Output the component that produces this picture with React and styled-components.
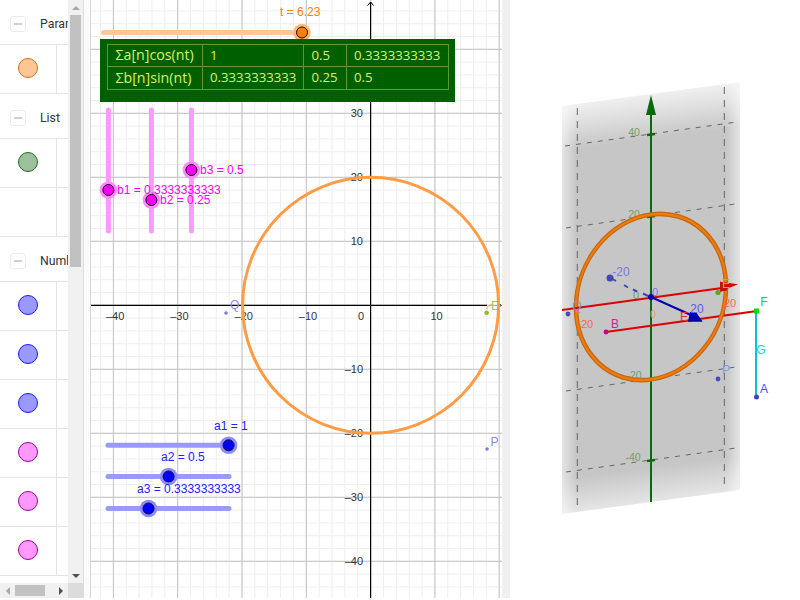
import React from "react";
import styled, { createGlobalStyle } from "styled-components";

const GlobalStyle = createGlobalStyle`
  html, body { margin: 0; padding: 0; background: #fff; overflow: hidden; }
  body { font-family: "Liberation Sans", Arial, sans-serif; }
`;

const Layout = styled.div`
  display: flex;
  width: 800px;
  height: 598px;
  background: #fff;
`;

/* algebra panel */
const AlgebraPanel = styled.div`
  display: grid;
  grid-template-columns: 68px 15px;
  grid-template-rows: 583px 15px;
  width: 83px;
  flex: none;
`;

const ListView = styled.div`
  overflow: hidden;
`;

const GroupHeader = styled.div`
  display: flex;
  align-items: center;
  box-sizing: border-box;
  height: ${(p) => p.$height}px;
  padding-top: ${(p) => p.$top}px;
  border-bottom: 1px solid #e4e4e4;
  white-space: nowrap;
`;

const CollapseButton = styled.span`
  display: flex;
  align-items: center;
  justify-content: center;
  flex: none;
  box-sizing: border-box;
  width: 16px;
  height: 16px;
  margin: 0 14px 0 10px;
  border: 1px solid #ececec;
  border-radius: 3px;
  &::before {
    content: "";
    width: 8px;
    height: 1.5px;
    background: #cfcfcf;
  }
`;

const GroupTitle = styled.span`
  font-family: "Roboto", "Liberation Sans", sans-serif;
  font-size: 12.3px;
  color: #333;
`;

const MarbleRow = styled.div`
  box-sizing: border-box;
  height: 49px;
  border-bottom: 1px solid #e4e4e4;
`;

const MarbleCell = styled.div`
  box-sizing: border-box;
  width: 57px;
  height: 48px;
  padding: 13px 0 0 18px;
  border-right: 1px solid #e4e4e4;
`;

const Marble = styled.div`
  box-sizing: border-box;
  width: 20px;
  height: 20px;
  border-radius: 50%;
  background: ${(p) => p.$fill};
  border: 1px solid ${(p) => p.$stroke};
`;

const VScroll = styled.div`
  display: flex;
  flex-direction: column;
  align-items: center;
  background: #f1f1f1;
`;

const ArrowSlot = styled.div`
  display: flex;
  align-items: center;
  justify-content: center;
  flex: none;
  height: 15px;
  width: 15px;
`;

const Arrow = styled.span`
  width: 0;
  height: 0;
  border-style: solid;
  border-color: transparent;
  ${(p) =>
    p.$dir === "up" && `border-width: 0 4px 4px; border-bottom-color: ${p.$color};`}
  ${(p) =>
    p.$dir === "down" && `border-width: 4px 4px 0; border-top-color: ${p.$color};`}
  ${(p) =>
    p.$dir === "left" && `border-width: 4px 4px 4px 0; border-right-color: ${p.$color};`}
  ${(p) =>
    p.$dir === "right" && `border-width: 4px 0 4px 4px; border-left-color: ${p.$color};`}
`;

const VThumb = styled.div`
  flex: none;
  width: 11px;
  height: 252px;
  background: #c1c1c1;
`;

const Spacer = styled.div`
  flex: 1;
`;

const HScroll = styled.div`
  display: flex;
  align-items: center;
  background: #f1f1f1;
`;

const HThumb = styled.div`
  flex: none;
  width: 30px;
  height: 11px;
  background: #c1c1c1;
`;

const Corner = styled.div`
  background: #dcdcdc;
`;

const LeftSplitter = styled.div`
  flex: none;
  box-sizing: border-box;
  width: 8px;
  background: #fbfbfb;
  border-left: 1px solid #dedede;
  border-right: 1px solid #d8d8d8;
`;

const RightSplitter = styled.div`
  flex: none;
  width: 8px;
  background: #f0f0f0;
`;

/* graphics view */
const GraphicsView = styled.div`
  position: relative;
  flex: none;
  width: 411px;
  overflow: hidden;
`;

const Canvas = styled.svg`
  display: block;
`;

const TickLabel = styled.text`
  font-family: "Liberation Sans", Arial, sans-serif;
  font-size: 11px;
  fill: #333;
`;

const ObjectLabel = styled.text`
  font-family: "Liberation Sans", Arial, sans-serif;
  font-size: ${(p) => p.$size || 12}px;
  fill: ${(p) => p.$color};
`;

const TablePlate = styled.div`
  position: absolute;
  left: 9px;
  top: 39px;
  box-sizing: border-box;
  width: 355px;
  height: 63px;
  padding: 4.5px 0 0 6.5px;
  background: #006000;
`;

const ValueTable = styled.table`
  border-collapse: collapse;
  table-layout: fixed;
  width: 341.5px;
  font-family: "Open Sans", "Liberation Sans", sans-serif;
  font-size: 13.2px;
  color: #dcf06a;
`;

const ValueCell = styled.td`
  box-sizing: border-box;
  height: 22.5px;
  width: ${(p) => p.$width}px;
  padding: 0 0 0 ${(p) => p.$pad}px;
  border: 1px solid #5c9a2c;
  white-space: nowrap;
  line-height: 1;
  font-size: ${(p) => p.$size || 13.2}px;
`;

const View3D = styled.div`
  flex: 1;
  overflow: hidden;
`;

const Label3D = styled.text`
  font-family: "Liberation Sans", Arial, sans-serif;
  font-size: ${(p) => p.$size || 11}px;
  fill: ${(p) => p.$color};
  text-anchor: middle;
  dominant-baseline: central;
`;

const ORANGE = "#ff9c45";

const groups = [
  { title: "Parameter", height: 45, top: 4, rows: [{ fill: "#ffc795", stroke: "#d9691a" }] },
  { title: "List", height: 45, top: 4, rows: [{ fill: "#9dbf9d", stroke: "#1f6f1f" }, {}] },
  {
    title: "Number",
    height: 45,
    top: 4,
    rows: [
      { fill: "#9999ff", stroke: "#1a1aff" },
      { fill: "#9999ff", stroke: "#1a1aff" },
      { fill: "#9999ff", stroke: "#1a1aff" },
      { fill: "#ff99ff", stroke: "#990099" },
      { fill: "#ff99ff", stroke: "#990099" },
      { fill: "#ff99ff", stroke: "#990099" },
    ],
  },
];

const range = (from, to, step) => {
  const out = [];
  for (let v = from; v <= to; v += step) out.push(v);
  return out;
};

const X0 = 370.6;
const Y0 = 305.3;
const UX = 6.43;
const UY = 6.4;

const sliders = [
  { x1: 103.5, y1: 32.5, x2: 302, y2: 32.5, tx: 302, ty: 32.5, track: "#ffc896", halo: "#ffb878", fill: "#ff7f00" },
  { x1: 108.4, y1: 110, x2: 108.4, y2: 231, tx: 108.4, ty: 190, track: "#ff99ff", halo: "#ff8cff", fill: "#ff00ff" },
  { x1: 151.4, y1: 110, x2: 151.4, y2: 231, tx: 151.4, ty: 200, track: "#ff99ff", halo: "#ff8cff", fill: "#ff00ff" },
  { x1: 191.4, y1: 110, x2: 191.4, y2: 231, tx: 191.4, ty: 170, track: "#ff99ff", halo: "#ff8cff", fill: "#ff00ff" },
  { x1: 108, y1: 445.3, x2: 229, y2: 445.3, tx: 228.6, ty: 445.3, track: "#9999ff", halo: "#8c8cff", fill: "#0000ff" },
  { x1: 108, y1: 476.5, x2: 229, y2: 476.5, tx: 168.6, ty: 476.5, track: "#9999ff", halo: "#8c8cff", fill: "#0000ff" },
  { x1: 108, y1: 508.5, x2: 229, y2: 508.5, tx: 148.5, ty: 508.5, track: "#9999ff", halo: "#8c8cff", fill: "#0000ff" },
];

const labels = [
  { x: 280, y: 16, color: "#ff7f00", text: "t = 6.23" },
  { x: 117, y: 194, color: "#ff00ff", text: "b1 = 0.3333333333" },
  { x: 160, y: 204, color: "#ff00ff", text: "b2 = 0.25" },
  { x: 200, y: 174, color: "#ff00ff", text: "b3 = 0.5" },
  { x: 214, y: 430, color: "#2222ff", text: "a1 = 1" },
  { x: 161, y: 461, color: "#2222ff", text: "a2 = 0.5" },
  { x: 137, y: 493, color: "#2222ff", text: "a3 = 0.3333333333" },
];

const GridLines = () => (
  <g>
    {range(-44, 20, 2).map((u) => (
      <line key={`mx${u}`} x1={X0 + u * UX} x2={X0 + u * UX} y1={0} y2={598} stroke="#eeeeee" />
    ))}
    {range(-46, 50, 2).map((u) => (
      <line key={`my${u}`} y1={Y0 + u * UY} y2={Y0 + u * UY} x1={90} x2={502} stroke="#eeeeee" />
    ))}
    {range(-40, 20, 10).map((u) => (
      <line key={`x${u}`} x1={X0 + u * UX} x2={X0 + u * UX} y1={0} y2={598} stroke="#c2c2c2" />
    ))}
    {range(-40, 40, 10).map((u) => (
      <line key={`y${u}`} y1={Y0 + u * UY} y2={Y0 + u * UY} x1={90} x2={502} stroke="#c2c2c2" />
    ))}
  </g>
);

const Axes = () => (
  <g>
    <line x1={91} x2={487} y1={Y0} y2={Y0} stroke="#000" strokeWidth="1.2" />
    <line x1={X0} x2={X0} y1={2} y2={598} stroke="#000" strokeWidth="1.2" />
    <path d="M367.6 5.5 L370.6 2 L373.6 5.5" fill="none" stroke="#000" />
    <path d="M498 302.3 L501 305.3 L498 308.3" fill="none" stroke="#000" />
    {[-40, -30, -20, -10, 10].map((v) => (
      <TickLabel key={v} x={X0 + v * UX + 1.7} y={320} textAnchor="middle">
        {v < 0 ? `\u2013${-v}` : v}
      </TickLabel>
    ))}
    {[30, 20, 10, -10, -20, -30, -40].map((v) => (
      <TickLabel key={v} x={363} y={Y0 - v * UY + 4} textAnchor="end">
        {v < 0 ? `\u2013${-v}` : v}
      </TickLabel>
    ))}
    <TickLabel x={358} y={320}>0</TickLabel>
  </g>
);

const Slider = ({ x1, y1, x2, y2, tx, ty, track, halo, fill }) => (
  <g>
    <line x1={x1} y1={y1} x2={x2} y2={y2} stroke={track} strokeWidth="5" strokeLinecap="round" />
    <circle cx={tx} cy={ty} r="8.8" fill={halo} />
    <circle cx={tx} cy={ty} r="5.5" fill={fill} stroke="#111" strokeWidth="1" />
  </g>
);

const GraphicsCanvas = () => (
  <Canvas width="411" height="598" viewBox="91 0 411 598">
    <GridLines />
    <Axes />
    <circle cx={X0} cy={Y0} r="128" fill="none" stroke={ORANGE} strokeWidth="3" />
    {sliders.map((s, i) => (
      <Slider key={i} {...s} />
    ))}
    {labels.map((l) => (
      <ObjectLabel key={l.text} x={l.x} y={l.y} $color={l.color}>
        {l.text}
      </ObjectLabel>
    ))}
    <circle cx="226" cy="313" r="1.8" fill="#7a7aee" />
    <ObjectLabel x="230" y="309" $color="#8a8af5">Q</ObjectLabel>
    <circle cx="486.6" cy="312.7" r="2.3" fill="#8cc320" />
    <path d="M492 304.5 Q486 306 487 309.5" fill="none" stroke="#ff9c45" strokeWidth="1" />
    <ObjectLabel x="491" y="309.5" $size={12} $color="#9acd32">E</ObjectLabel>
    <circle cx="487" cy="449" r="1.8" fill="#7a7aee" />
    <ObjectLabel x="490.5" y="446" $color="#8a8af5">P</ObjectLabel>
  </Canvas>
);

const horizontalDashes = [
  "M565 146 L737 122",
  "M566 228 L735 204",
  "M566 391 L736 367",
  "M566 472 L736 448",
];

const verticalDashes = ["M577.3 108 L577.3 510", "M724.3 87 L724.3 487"];

const Scene3D = () => (
  <Canvas width="290" height="598" viewBox="510 0 290 598">
    <defs>
      <linearGradient id="planeV" gradientUnits="userSpaceOnUse" x1="646" y1="94" x2="700" y2="502">
        <stop offset="0" stopColor="#f0f0f0" />
        <stop offset="0.05" stopColor="#dedede" />
        <stop offset="0.11" stopColor="#c6c6c6" />
        <stop offset="0.9" stopColor="#c6c6c6" />
        <stop offset="1" stopColor="#ebebeb" />
      </linearGradient>
      <linearGradient id="planeH" gradientUnits="userSpaceOnUse" x1="562" y1="0" x2="740" y2="0">
        <stop offset="0" stopColor="#777" />
        <stop offset="0.08" stopColor="#fff" />
        <stop offset="0.92" stopColor="#fff" />
        <stop offset="1" stopColor="#777" />
      </linearGradient>
      <mask id="planeMask">
        <rect x="510" y="0" width="290" height="598" fill="url(#planeH)" />
      </mask>
    </defs>
    <polygon points="562,106 740,82 740,490 562,514" fill="url(#planeV)" mask="url(#planeMask)" />
    {horizontalDashes.map((d) => (
      <path key={d} d={d} fill="none" stroke="#666" strokeDasharray="5 6" />
    ))}
    {verticalDashes.map((d) => (
      <path key={d} d={d} fill="none" stroke="#666" strokeDasharray="7 6" />
    ))}
    <line x1="651" y1="100" x2="651" y2="502" stroke="#0a690a" strokeWidth="2" />
    <polygon points="651,95 656,115 646,115" fill="#0a690a" />
    {[134.6, 216.5, 379, 460.5].map((y) => (
      <line key={y} x1="647" x2="655" y1={y + 0.5} y2={y - 0.5} stroke="#0a690a" strokeWidth="2.5" />
    ))}
    <Label3D x="634" y="131.5" $size={10.5} $color="#6f9f6f">40</Label3D>
    <Label3D x="634" y="214" $size={10.5} $color="#6f9f6f">20</Label3D>
    <Label3D x="634" y="375" $size={10.5} $color="#6f9f6f">-20</Label3D>
    <Label3D x="633" y="457" $size={10.5} $color="#6f9f6f">-40</Label3D>
    <Label3D x="636" y="295" $color="#6f9f6f">0</Label3D>

    <line x1="606" y1="332" x2="757" y2="311" stroke="#dd0000" strokeWidth="2" />

    <g transform="matrix(1 -0.135 0 1 651 297)">
      <ellipse cx="0" cy="0" rx="75" ry="82.5" fill="none" stroke="#c9670a" strokeWidth="4.6" />
      <ellipse cx="0" cy="0" rx="75" ry="82.5" fill="none" stroke="#ee7d10" strokeWidth="2" />
    </g>

    <line x1="562" y1="310" x2="722" y2="288" stroke="#dd0000" strokeWidth="2" />
    <polygon points="738,284.3 720,281.7 720,291.7" fill="#dd0000" />
    <polygon points="720,281.7 727,282.7 727,290.5 720,291.7" fill="#c41010" />

    <line x1="651" y1="297" x2="691" y2="315" stroke="#0000b0" strokeWidth="2" />
    <polygon points="688,321.7 702.7,321.7 696,312 690,312" fill="#0000b0" />
    <path d="M609 277 L616 281 M624 285 L628 287.5 M633 289.5 L637 291.5 M643 293.5 L648 296" stroke="#4545b5" strokeWidth="2" fill="none" />
    <circle cx="610" cy="278" r="3.5" fill="#4545b5" />
    <circle cx="651" cy="297" r="3" fill="#0000b0" />

    <Label3D x="621" y="272" $size={12} $color="#7a7ae0">-20</Label3D>
    <Label3D x="655" y="292" $size={11} $color="#7a7ae8">0</Label3D>
    <Label3D x="653" y="314" $size={11} $color="#f09a60">0</Label3D>
    <Label3D x="697" y="309" $size={12} $color="#5a5ae8">20</Label3D>
    <Label3D x="587" y="324" $size={11} $color="#f06a50">20</Label3D>
    <Label3D x="730" y="303" $size={11} $color="#f06a50">20</Label3D>
    <Label3D x="615" y="324" $size={12} $color="#e6148c">B</Label3D>
    <Label3D x="684" y="317" $size={12} $color="#e03030">E</Label3D>
    <Label3D x="726" y="284" $size={12} $color="#c8b020">E</Label3D>
    <Label3D x="577" y="306" $size={12} $color="#8a8af5">Q</Label3D>
    <Label3D x="726" y="370" $size={12} $color="#7a9af5">P</Label3D>

    <circle cx="568" cy="314" r="2.4" fill="#4848c8" />
    <circle cx="606" cy="332" r="2.4" fill="#c00090" />
    <circle cx="718" cy="292.5" r="2.6" fill="#6f9f20" />
    <circle cx="718" cy="379" r="2.4" fill="#4848c8" />

    <line x1="756" y1="311" x2="756" y2="397" stroke="#10c0d0" strokeWidth="2" />
    <rect x="754" y="308.5" width="5" height="5" fill="#00e000" />
    <circle cx="756.5" cy="397" r="2.5" fill="#3f3fc0" />
    <Label3D x="764" y="302" $size={12} $color="#10e010">F</Label3D>
    <Label3D x="761" y="350" $size={12} $color="#20d0e0">G</Label3D>
    <Label3D x="764" y="389" $size={12} $color="#4a4af0">A</Label3D>
  </Canvas>
);

export default function App() {
  return (
    <>
      <GlobalStyle />
      <Layout>
        <AlgebraPanel>
          <ListView>
            {groups.map((g) => (
              <div key={g.title}>
                <GroupHeader $height={g.height} $top={g.top}>
                  <CollapseButton />
                  <GroupTitle>{g.title}</GroupTitle>
                </GroupHeader>
                {g.rows.map((r, i) => (
                  <MarbleRow key={i}>
                    <MarbleCell>{r.fill && <Marble $fill={r.fill} $stroke={r.stroke} />}</MarbleCell>
                  </MarbleRow>
                ))}
              </div>
            ))}
          </ListView>
          <VScroll>
            <ArrowSlot>
              <Arrow $dir="up" $color="#a8a8a8" />
            </ArrowSlot>
            <VThumb />
            <Spacer />
            <ArrowSlot>
              <Arrow $dir="down" $color="#505050" />
            </ArrowSlot>
          </VScroll>
          <HScroll>
            <ArrowSlot>
              <Arrow $dir="left" $color="#a8a8a8" />
            </ArrowSlot>
            <HThumb />
            <Spacer />
            <ArrowSlot>
              <Arrow $dir="right" $color="#505050" />
            </ArrowSlot>
          </HScroll>
          <Corner />
        </AlgebraPanel>
        <LeftSplitter />
        <GraphicsView>
          <GraphicsCanvas />
          <TablePlate>
            <ValueTable>
              <tbody>
                <tr>
                  <ValueCell $width={95} $pad={8} $size={14.2}>Σa[n]cos(nt)</ValueCell>
                  <ValueCell $width={101.5} $pad={7.5}>1</ValueCell>
                  <ValueCell $width={42.5} $pad={7.5}>0.5</ValueCell>
                  <ValueCell $width={102.5} $pad={7.5}>0.3333333333</ValueCell>
                </tr>
                <tr>
                  <ValueCell $width={95} $pad={8} $size={14.2}>Σb[n]sin(nt)</ValueCell>
                  <ValueCell $width={101.5} $pad={7.5}>0.3333333333</ValueCell>
                  <ValueCell $width={42.5} $pad={7.5}>0.25</ValueCell>
                  <ValueCell $width={102.5} $pad={7.5}>0.5</ValueCell>
                </tr>
              </tbody>
            </ValueTable>
          </TablePlate>
        </GraphicsView>
        <RightSplitter />
        <View3D>
          <Scene3D />
        </View3D>
      </Layout>
    </>
  );
}
